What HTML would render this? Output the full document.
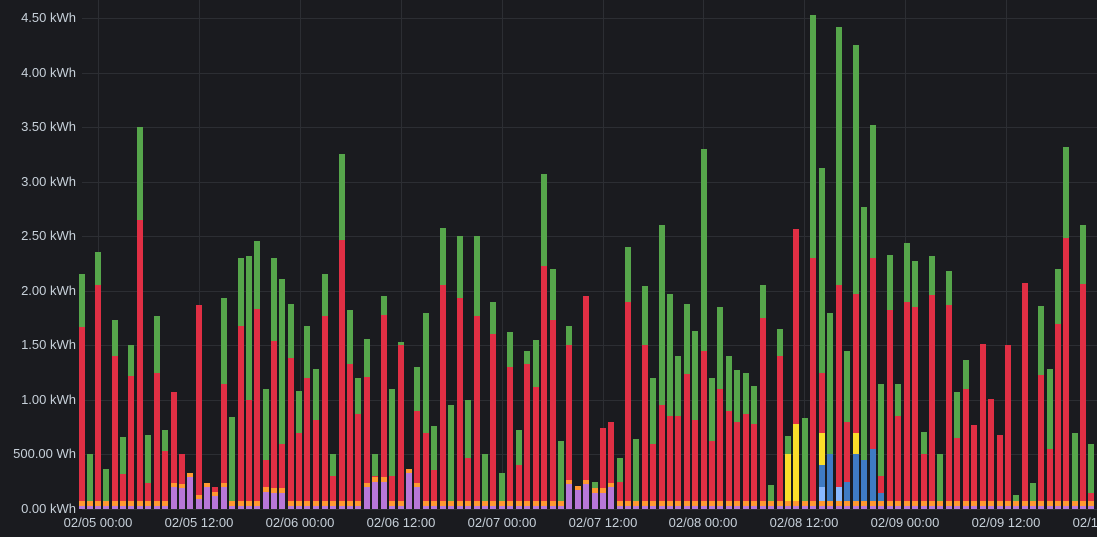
<!DOCTYPE html>
<html><head><meta charset="utf-8"><style>
html,body{margin:0;padding:0;background:#1a1b1f;}
#c{position:relative;width:1097px;height:537px;overflow:hidden;background:#1a1b1f;font-family:"Liberation Sans",sans-serif;font-size:13px;color:#c7d0d9;}
.h{position:absolute;left:82px;right:0;height:1px;background:#2c2e33;}
.v{position:absolute;top:0;height:509px;width:1px;background:#2c2e33;}
.yl{position:absolute;right:1021px;width:80px;text-align:right;line-height:14px;white-space:nowrap;}
.xl{position:absolute;top:516px;white-space:nowrap;width:100px;text-align:center;line-height:14px;}
.b{position:absolute;width:6px;}
</style></head><body><div id="c"></div>
<script>
var c=document.getElementById('c'),h='';
var Y0=509,S=109.1;
function y(v){return Y0-v*S;}
var labs=['0.00 kWh','500.00 Wh','1.00 kWh','1.50 kWh','2.00 kWh','2.50 kWh','3.00 kWh','3.50 kWh','4.00 kWh','4.50 kWh'];
for(var i=0;i<10;i++){var yy=Math.round(y(i*0.5));h+='<div class="h" style="top:'+yy+'px"></div><div class="yl" style="top:'+(yy-7)+'px">'+labs[i]+'</div>';}
var xs=['02/05 00:00','02/05 12:00','02/06 00:00','02/06 12:00','02/07 00:00','02/07 12:00','02/08 00:00','02/08 12:00','02/09 00:00','02/09 12:00','02/10 00:00'];
for(var k=0;k<11;k++){var x=98+100.9*k;h+='<div class="v" style="left:'+Math.round(x)+'px"></div><div class="xl" style="left:'+Math.round(x-50)+'px">'+xs[k]+'</div>';}
var d=[
[82,2.15,1.67],[90,0.5,0],[98,2.36,2.05],[106,0.37,0],[115,1.73,1.4],[123,0.66,0.32],[131,1.5,1.22],[140,3.5,2.65],[148,0.68,0.24],[157,1.77,1.25],[165,0.72,0.53],[174,0,1.07,0,0,0.2],[182,0,0.5,0,0,0.19],[190,0,0,0,0,0.29],[199,0,1.87,0,0,0.09],[207,0,0,0,0,0.2],[215,0,0.2,0,0,0.12],[224,1.93,1.15,0,0,0.2],[232,0.84,0],[241,2.3,1.68],[249,2.32,1.0],[257,2.46,1.83],[266,1.1,0.45,0,0,0.16],[274,2.3,1.54,0,0,0.15],[282,2.11,0.6,0,0,0.15],[291,1.88,1.38],[299,1.08,0.7],[307,1.68,1.2],[316,1.28,0.82],[325,2.15,1.77],[333,0.5,0.3],[342,3.25,2.47],[350,1.82,1.33],[358,1.2,0.87],[367,1.56,1.21,0,0,0.2],[375,0.5,0.3,0,0,0.25],[384,1.95,1.78,0,0,0.25],[392,1.1,0.3],[401,1.53,1.5],[409,0,0,0,0,0.33],[417,1.3,0.9,0,0,0.2],[426,1.8,0.7],[434,0.76,0.36],[443,2.58,2.05],[451,0.95,0],[460,2.5,1.93],[468,1.0,0.47],[477,2.5,1.77],[485,0.5,0],[493,1.9,1.6],[502,0.33,0],[510,1.62,1.3],[519,0.72,0.4],[527,1.45,1.33],[536,1.55,1.12],[544,3.07,2.23],[553,2.2,1.73],[561,0.62,0],[569,1.68,1.5,0,0,0.23],[578,0,0,0,0,0.17],[586,0,1.95,0,0,0.23],[595,0.25,0,0,0,0.15],[603,0,0.74,0,0,0.15],[611,0,0.8,0,0,0.2],[620,0.47,0.25],[628,2.4,1.9],[636,0.64,0],[645,2.04,1.5],[653,1.2,0.6],[662,2.6,0.95],[670,1.97,0.85],[678,1.4,0.85],[687,1.88,1.24],[695,1.63,0.82],[704,3.3,1.45],[712,1.2,0.62],[720,1.85,1.1],[729,1.4,0.9],[737,1.27,0.8],[746,1.25,0.87],[754,1.13,0.78],[763,2.05,1.75],[771,0.22,0],[780,1.65,1.4],[788,0.67,0,0.5],[796,0,2.57,0.78],[805,0.83,0],[813,4.53,2.3],[822,3.13,1.25,0.7,0.4,0,0.2],[830,1.8,0,0,0.5],[839,4.42,2.05,0,0.17,0,0.2],[847,1.45,0.8,0,0.25],[856,4.25,1.97,0.7,0.5],[864,2.77,0,0,0.45],[873,3.52,2.3,0,0.55],[881,1.15,0.3,0,0.15],[890,2.33,1.82],[898,1.15,0.85],[907,2.44,1.9],[915,2.27,1.85],[924,0.71,0.5],[932,2.32,1.96],[940,0.5,0],[949,2.18,1.87],[957,1.07,0.65],[966,1.37,1.1],[974,0,0.77],[983,0,1.51],[991,0,1.01],[1000,0,0.68],[1008,0,1.5],[1016,0.13,0],[1025,0,2.07],[1033,0.24,0],[1041,1.86,1.23],[1050,1.28,0.55],[1058,2.2,1.7],[1066,3.32,2.48],[1075,0.7,0],[1083,2.6,2.06],[1091,0.6,0.15]
];
for(var i=0;i<d.length;i++){var e=d[i],x=e[0]-3;
 var p=e[5]||0.03;
 var L=[[p,'#b877d9'],[p+0.04,'#ff9830'],[e[6]||0,'#8ab8ff'],[e[4]||0,'#3f7bc4'],[e[3]||0,'#fade2a'],[e[2]||0,'#e02f44'],[e[1]||0,'#56a64b']];
 var lo=0;
 for(var j=0;j<L.length;j++){var v=L[j][0];if(v>lo){var t=Math.round(y(v)),bt=Math.round(y(lo));h+='<div class="b" style="left:'+x+'px;top:'+t+'px;height:'+Math.max(1,bt-t)+'px;background:'+L[j][1]+'"></div>';lo=v;}}
}
c.innerHTML=h;
</script></body></html>
